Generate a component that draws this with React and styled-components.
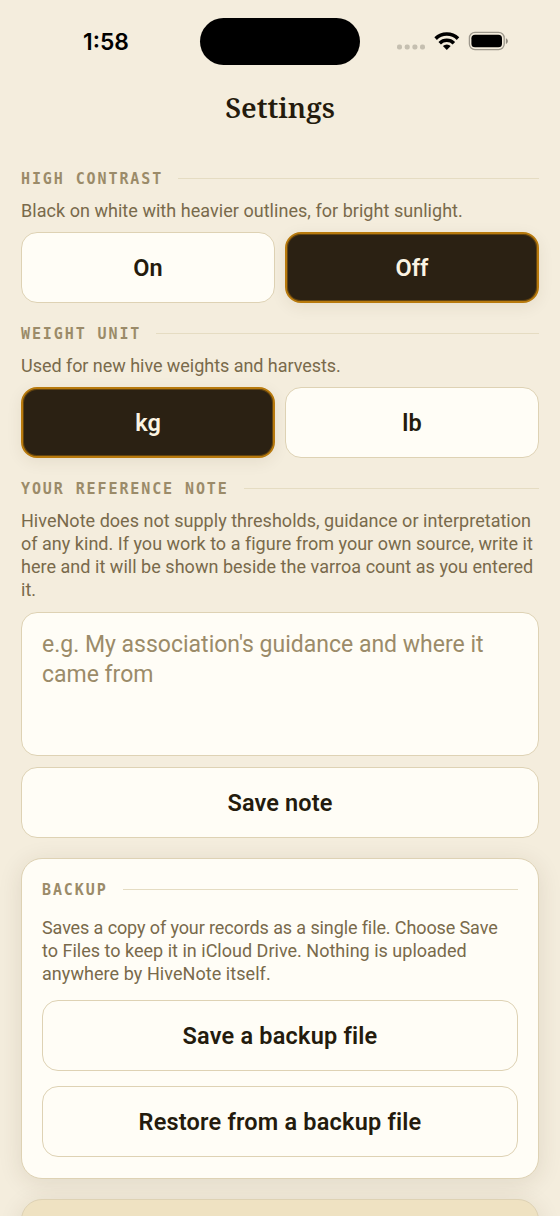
import React from 'react';
import styled, { createGlobalStyle } from 'styled-components';

const GlobalStyle = createGlobalStyle`
  * { box-sizing: border-box; }
  html, body { margin: 0; background: #f4eddd; }
  body { font-family: Roboto, sans-serif; color: #241b0d; }
  button, textarea { font-family: inherit; margin: 0; }
`;

const Screen = styled.div`
  width: 560px;
  height: 1216px;
  overflow: hidden;
  background: #f4eddd;
`;

const StatusBar = styled.header`
  display: grid;
  grid-template-columns: 200px 160px 200px;
  align-items: center;
  height: 82px;
`;

const Clock = styled.span`
  padding: 1px 0 0 12px;
  text-align: center;
  font: 600 22.8px/28px Inter, sans-serif;
  color: #000;
`;

const Island = styled.div`
  height: 47px;
  border-radius: 24px;
  background: #000;
`;

const Indicators = styled.div`
  display: flex;
  align-items: center;
  padding-left: 36px;
  svg { display: block; }
`;

const Title = styled.h1`
  margin: 0;
  height: 83px;
  padding-top: 6px;
  text-align: center;
  font: 650 28px/38px 'Noto Serif', serif;
`;

const Content = styled.main`
  display: flex;
  flex-direction: column;
  padding: 1px 21px 0;
`;

const Section = styled.section`
  display: flex;
  flex-direction: column;
  margin-bottom: ${p => p.$gap || 18}px;
`;

const Heading = styled.h2`
  display: flex;
  align-items: center;
  gap: 15px;
  margin: 0 0 ${p => p.$gap || 7}px;
  height: 26px;
  padding-top: 1px;
  font: 700 15px/25px 'DejaVu Sans Mono', monospace;
  letter-spacing: 1.9px;
  color: #9b8b69;
  white-space: nowrap;
  text-transform: uppercase;
  &::after {
    content: '';
    flex: 1;
    height: 1px;
    margin-bottom: 2px;
    background: #e5dcc2;
  }
`;

const Help = styled.p`
  margin: 0 0 ${p => p.$gap || 10}px;
  font-size: 18px;
  line-height: 23px;
  color: #796a4b;
`;

const Line = styled.span`
  display: block;
  white-space: nowrap;
  letter-spacing: ${p => p.$track || 0}px;
`;

const Choices = styled.div`
  display: grid;
  grid-template-columns: 1fr 1fr;
  gap: 10px;
`;

const Button = styled.button`
  width: 100%;
  height: 71px;
  padding: 0;
  border: ${p => (p.$active ? '2px solid #b87a0d' : '1px solid #ded2b4')};
  border-radius: 16px;
  background: ${p => (p.$active ? '#2b2113' : '#fffdf6')};
  color: ${p => (p.$active ? '#fbf4e3' : '#241b0d')};
  font-size: 23.5px;
  font-weight: 600;
  letter-spacing: ${p => p.$track || 0}px;
  box-shadow: ${p => (p.$active
    ? 'inset 0 0 0 1px rgba(184, 122, 13, 0.4), 0 4px 16px rgba(70, 50, 15, 0.08)'
    : 'none')};
`;

const NoteField = styled.textarea`
  display: block;
  width: 100%;
  height: 144px;
  margin-bottom: 11px;
  padding: 17px 20px 15px;
  border: 1px solid #ded2b4;
  border-radius: 16px;
  background: #fffdf6;
  resize: none;
  outline: none;
  overflow: hidden;
  font-size: 23px;
  line-height: 30px;
  &::placeholder { color: #9b8b69; opacity: 1; }
`;

const Card = styled.section`
  height: 321px;
  padding: 18px 20px 0;
  margin-bottom: 20px;
  border: 1px solid #ded2b4;
  border-radius: 21px;
  background: #fffdf6;
  box-shadow: 0 4px 24px rgba(60, 45, 15, 0.11);
`;

const Stack = styled.div`
  display: flex;
  flex-direction: column;
  gap: 15px;
`;

const NextCard = styled(Card)`
  height: 120px;
  margin: 0;
  background: #efe2c2;
`;

function StatusIcons() {
  return (
    <svg width="114" height="22" viewBox="396 30 114 22" aria-hidden="true">
      <g fill="#c5bfb0">
        <rect x="397" y="44.5" width="5" height="5" rx="2" />
        <rect x="404.7" y="44.5" width="5" height="5" rx="2" />
        <rect x="412.4" y="44.5" width="5" height="5" rx="2" />
        <rect x="420" y="44.5" width="5" height="5" rx="2" />
      </g>
      <g fill="none" stroke="#000" strokeWidth="3.6">
        <path d="M435.6 38.6a16 16 0 0 1 22.4 0" />
        <path d="M439.7 43.2a10.2 10.2 0 0 1 14.2 0" />
      </g>
      <path d="M446.8 50l-3.9-3.9a5.6 5.6 0 0 1 7.8 0z" fill="#000" />
      <rect x="469.4" y="32.4" width="34.8" height="17.2" rx="5.6" fill="none" stroke="#9d988c" strokeWidth="1.3" />
      <rect x="471.4" y="34.7" width="30.6" height="12.6" rx="3.6" fill="#000" />
      <path d="M505.9 38.2c2.6 1 2.6 4.8 0 5.8z" fill="#8f8a7f" />
    </svg>
  );
}

export default function App() {
  return (
    <>
      <GlobalStyle />
      <Screen>
        <StatusBar>
          <Clock>1:58</Clock>
          <Island />
          <Indicators><StatusIcons /></Indicators>
        </StatusBar>
        <Title>Settings</Title>
        <Content>
          <Section>
            <Heading>High contrast</Heading>
            <Help><Line $track={0.04}>Black on white with heavier outlines, for bright sunlight.</Line></Help>
            <Choices>
              <Button>On</Button>
              <Button $active>Off</Button>
            </Choices>
          </Section>
          <Section>
            <Heading>Weight unit</Heading>
            <Help><Line $track={-0.04}>Used for new hive weights and harvests.</Line></Help>
            <Choices>
              <Button $active>kg</Button>
              <Button>lb</Button>
            </Choices>
          </Section>
          <Section $gap={20}>
            <Heading>Your reference note</Heading>
            <Help $gap={11}>
              <Line $track={0.03}>HiveNote does not supply thresholds, guidance or interpretation</Line>
              <Line $track={0.02}>of any kind. If you work to a figure from your own source, write it</Line>
              <Line $track={0.03}>here and it will be shown beside the varroa count as you entered</Line>
              <Line>it.</Line>
            </Help>
            <NoteField placeholder="e.g. My association's guidance and where it came from" />
            <Button $track={0.15}>Save note</Button>
          </Section>
          <Card>
            <Heading $gap={13}>Backup</Heading>
            <Help $gap={15}>
              <Line $track={-0.11}>Saves a copy of your records as a single file. Choose Save</Line>
              <Line $track={0.01}>to Files to keep it in iCloud Drive. Nothing is uploaded</Line>
              <Line $track={0.06}>anywhere by HiveNote itself.</Line>
            </Help>
            <Stack>
              <Button $track={0.2}>Save a backup file</Button>
              <Button $track={0.2}>Restore from a backup file</Button>
            </Stack>
          </Card>
          <NextCard />
        </Content>
      </Screen>
    </>
  );
}
